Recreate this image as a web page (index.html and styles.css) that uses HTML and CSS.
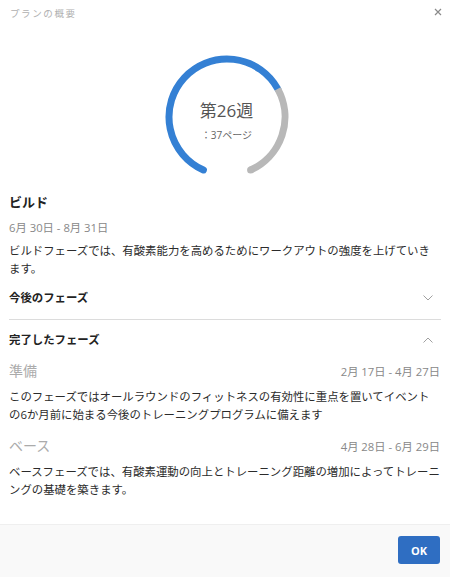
FILE: index.html
```html
<!DOCTYPE html>
<html lang="ja">
<head>
<meta charset="utf-8">
<link rel="stylesheet" href="styles.css">
</head>
<body>
<div class="dialog">
  <div class="header">
    <span class="title">プランの概要</span>
    <svg class="close" width="8" height="8" viewBox="0 0 8 8"><path d="M1 1L7 7M7 1L1 7" stroke="#8a8a8a" stroke-width="1.2" fill="none"/></svg>
  </div>
  <div class="ring-wrap">
    <div class="ring">
      <svg width="124" height="124" viewBox="0 0 124 124">
        <path d="M38.41 114.98 A58 58 0 1 1 112.73 33.88" stroke="#3480d4" stroke-width="7" fill="none" stroke-linecap="round"/>
        <path d="M112.73 33.88 A58 58 0 0 1 85.59 114.98" stroke="#b8b8b8" stroke-width="7" fill="none" stroke-linecap="butt"/>
        <circle cx="85.59" cy="114.98" r="3.5" fill="#b8b8b8"/>
      </svg>
      <div class="ring-text">
        <div class="week">第26週</div>
        <div class="page">：37ページ</div>
      </div>
    </div>
  </div>
  <div class="content">
    <div class="phase-title">ビルド</div>
    <div class="phase-date">6月 30日 - 8月 31日</div>
    <p class="desc">ビルドフェーズでは、有酸素能力を高めるためにワークアウトの強度を上げていき<br>ます。</p>
    <div class="acc-row acc-first">
      <span class="acc-label">今後のフェーズ</span>
      <svg class="chev" width="10" height="6" viewBox="0 0 10 6"><path d="M0.5 0.5L5 5L9.5 0.5" stroke="#a0a0a0" stroke-width="1" fill="none"/></svg>
    </div>
    <div class="acc-row acc-second">
      <span class="acc-label">完了したフェーズ</span>
      <svg class="chev" width="10" height="6" viewBox="0 0 10 6"><path d="M0.5 5.5L5 1L9.5 5.5" stroke="#a0a0a0" stroke-width="1" fill="none"/></svg>
    </div>
    <div class="past">
      <div class="past-head">
        <span class="past-name">準備</span>
        <span class="past-date">2月 17日 - 4月 27日</span>
      </div>
      <p class="desc past-desc">このフェーズではオールラウンドのフィットネスの有効性に重点を置いてイベント<br>の6か月前に始まる今後のトレーニングプログラムに備えます</p>
    </div>
    <div class="past">
      <div class="past-head">
        <span class="past-name">ベース</span>
        <span class="past-date">4月 28日 - 6月 29日</span>
      </div>
      <p class="desc past-desc">ベースフェーズでは、有酸素運動の向上とトレーニング距離の増加によってトレーニ<br>ングの基礎を築きます。</p>
    </div>
  </div>
  <div class="footer">
    <button class="ok">OK</button>
  </div>
</div>
</body>
</html>
```

FILE: styles.css
```css
* { box-sizing: border-box; }
html, body { margin: 0; padding: 0; background: #fff; }
body {
  width: 450px;
  height: 577px;
  font-family: "Open Sans", "Noto Sans CJK JP", sans-serif;
  color: #333;
  overflow: hidden;
}
.dialog {
  height: 577px;
  display: flex;
  flex-direction: column;
}
.header {
  height: 28px;
  display: flex;
  align-items: center;
  justify-content: space-between;
  padding: 0 8px 0 10px;
}
.title {
  font-size: 9.5px;
  letter-spacing: 1.6px;
  color: #b0b0b0;
  line-height: 28px;
}
.close { margin-top: -5px; }
.ring-wrap {
  display: flex;
  justify-content: center;
  margin-top: 27px;
  padding-left: 3px;
}
.ring {
  display: grid;
  width: 124px;
  height: 124px;
}
.ring > svg, .ring-text { grid-area: 1 / 1; }
.ring-text {
  display: flex;
  flex-direction: column;
  align-items: center;
  padding-top: 45px;
}
.week {
  font-size: 17px;
  line-height: 22px;
  color: #555;
}
.page {
  margin-top: 6px;
  font-size: 10px;
  line-height: 14px;
  color: #666;
}
.content {
  padding: 0 9px;
}
.phase-title {
  margin-top: 14px;
  font-size: 13px;
  font-weight: 700;
  line-height: 18px;
  color: #222;
}
.phase-date {
  margin-top: 8px;
  font-size: 11.3px;
  line-height: 18px;
  color: #888;
}
.desc {
  margin: 5px 0 0;
  font-size: 11.4px;
  line-height: 18px;
  color: #2b2b2b;
  white-space: nowrap;
}
.acc-row {
  display: flex;
  align-items: center;
  justify-content: space-between;
  padding-right: 8px;
}
.acc-first {
  padding-top: 11px;
  padding-bottom: 12px;
  border-bottom: 1px solid #dcdcdc;
}
.acc-second {
  padding-top: 11px;
}
.acc-label {
  font-size: 11.4px;
  font-weight: 700;
  line-height: 18px;
  color: #222;
}
.past { margin-top: 12px; }
.past-head {
  display: flex;
  justify-content: space-between;
  align-items: center;
  height: 20px;
}
.past-name {
  font-size: 14px;
  line-height: 20px;
  color: #ababab;
}
.past-date {
  font-size: 11.3px;
  color: #888;
  padding-right: 1px;
}
.past-desc { margin-top: 7px; }
.footer {
  margin-top: auto;
  height: 53px;
  background: #f9f9f9;
  border-top: 1px solid #efefef;
  display: flex;
  justify-content: flex-end;
  align-items: flex-start;
  padding: 11px 10px 0 0;
}
.ok {
  width: 42px;
  height: 28px;
  border: none;
  border-radius: 3px;
  background: #2f6ec2;
  color: #fff;
  font-family: "Open Sans", sans-serif;
  font-weight: 700;
  font-size: 11px;
  padding: 0;
}
```
